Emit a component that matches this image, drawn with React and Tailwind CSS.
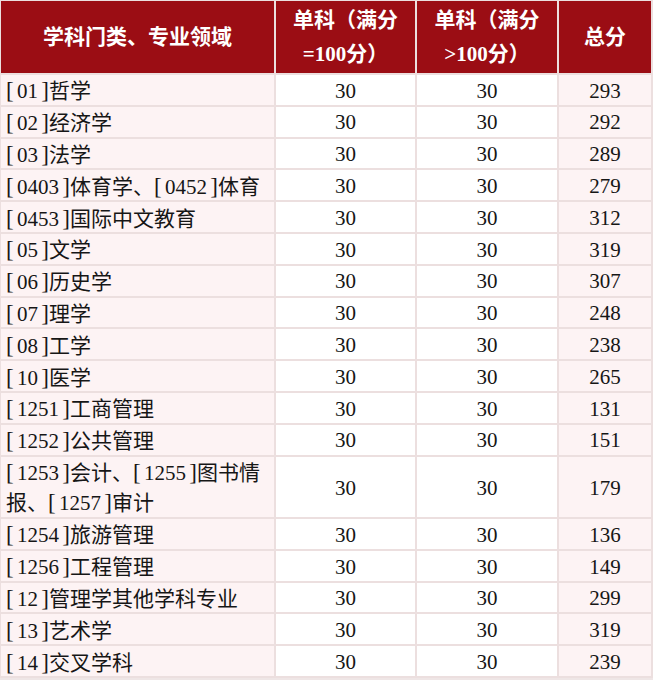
const rows = [
    ['[01]哲学', '30', '30', '293'],
    ['[02]经济学', '30', '30', '292'],
    ['[03]法学', '30', '30', '289'],
    ['[0403]体育学、[0452]体育', '30', '30', '279'],
    ['[0453]国际中文教育', '30', '30', '312'],
    ['[05]文学', '30', '30', '319'],
    ['[06]历史学', '30', '30', '307'],
    ['[07]理学', '30', '30', '248'],
    ['[08]工学', '30', '30', '238'],
    ['[10]医学', '30', '30', '265'],
    ['[1251]工商管理', '30', '30', '131'],
    ['[1252]公共管理', '30', '30', '151'],
    [['[1253]会计、[1255]图书情', '报、[1257]审计'], '30', '30', '179'],
    ['[1254]旅游管理', '30', '30', '136'],
    ['[1256]工程管理', '30', '30', '149'],
    ['[12]管理学其他学科专业', '30', '30', '299'],
    ['[13]艺术学', '30', '30', '319'],
    ['[14]交叉学科', '30', '30', '239'],
]

// brackets in the source are wide, SimSun-like boxes
function Label({ text }) {
    const parts = text.split(/([\[\]])/).filter((p) => p !== '')
    return (
        <span>
            {parts.map((p, i) => {
                if (p === '[') {
                    return <span key={i} className="inline-block w-[11px] text-left text-[23px] leading-none">[</span>
                }
                if (p === ']') {
                    return <span key={i} className="inline-block w-[11px] text-right text-[23px] leading-none">]</span>
                }
                return <span key={i}>{p}</span>
            })}
        </span>
    )
}

function Header({ children }) {
    return (
        <div className="h-[72px] bg-[#9b0d14] text-white font-bold text-[21px] leading-[34px] flex flex-col items-center justify-center text-center">
            {children}
        </div>
    )
}

function Row({ row }) {
    const tall = Array.isArray(row[0])
    const h = tall ? 'h-[60.5px]' : 'h-[29.8px]'
    return (
        <>
            <div className={`${h} bg-[#fdf3f4] pl-[5px] pt-[3px] flex flex-col justify-center leading-[30px] whitespace-nowrap`}>
                {tall ? row[0].map((l) => <div key={l}><Label text={l} /></div>) : <div><Label text={row[0]} /></div>}
            </div>
            <div className={`${h} bg-white pt-[3px] flex items-center justify-center`}>{row[1]}</div>
            <div className={`${h} bg-white pt-[3px] flex items-center justify-center`}>{row[2]}</div>
            <div className={`${h} bg-[#fdf3f4] pt-[3px] flex items-center justify-center`}>{row[3]}</div>
        </>
    )
}

export default function App() {
    return (
        <div
            className="w-[653px] h-[680px] bg-[#efe6e6] overflow-hidden"
            style={{ fontFamily: '"Liberation Serif", "Noto Sans CJK SC", serif' }}
        >
            <div className="grid grid-cols-[273px_139px_140px_92px] gap-[2px] bg-[#ecdfdf] pl-[1px] pr-[2px] pt-[1px] pb-[2px] text-[21px] text-[#161616]">
                <Header>学科门类、专业领域</Header>
                <Header>
                    <span>单科（满分</span>
                    <span>=100分）</span>
                </Header>
                <Header>
                    <span>单科（满分</span>
                    <span>&gt;100分）</span>
                </Header>
                <Header>总分</Header>
                {rows.map((r, i) => (
                    <Row row={r} key={i} />
                ))}
            </div>
        </div>
    )
}
